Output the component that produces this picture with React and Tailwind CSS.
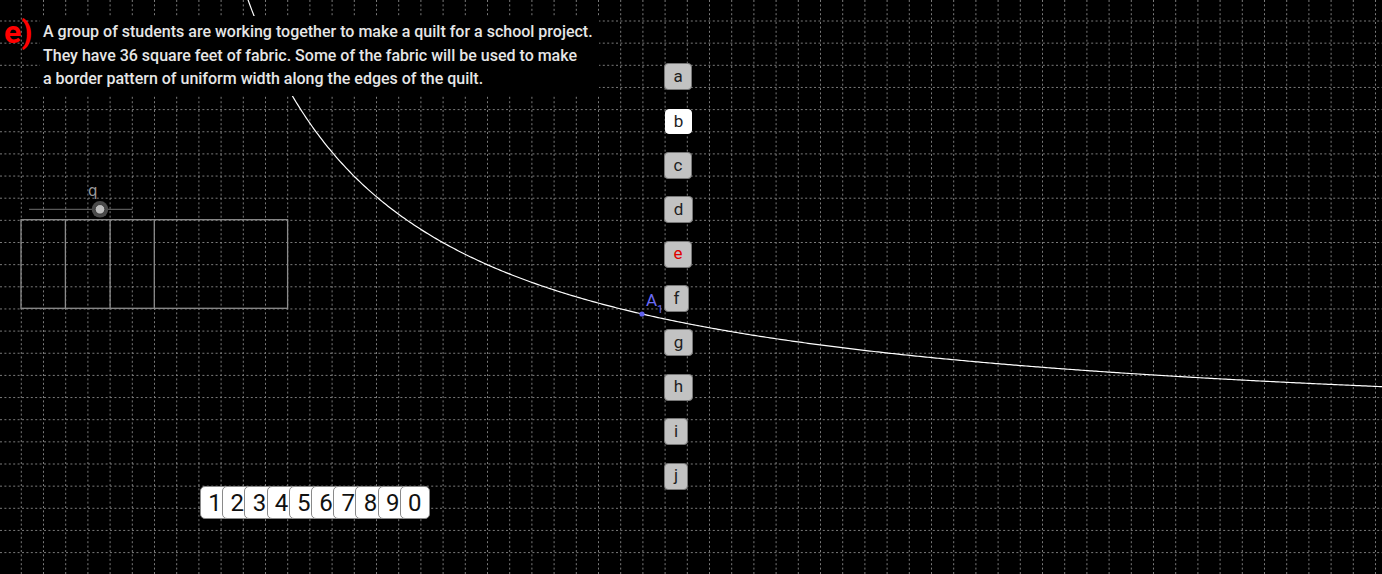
import React from 'react';

const GX = 21.3;
const GY = 21;
const SX = 22.2;
const SY = 22.15;

const letters = [
  { t: 'a', w: 28 },
  { t: 'b', w: 27, active: true },
  { t: 'c', w: 28 },
  { t: 'd', w: 29 },
  { t: 'e', w: 28, red: true },
  { t: 'f', w: 25 },
  { t: 'g', w: 29 },
  { t: 'h', w: 29 },
  { t: 'i', w: 24 },
  { t: 'j', w: 24 },
];

const digits = ['1', '2', '3', '4', '5', '6', '7', '8', '9', '0'];

const Grid = () => {
  const xs = [];
  for (let k = -1; k < 63; k++) xs.push(GX + SX * k);
  const ys = [];
  for (let k = -1; k < 26; k++) ys.push(GY + SY * k);

  // hyperbola through the point A1
  const pts = [];
  for (let x = 240; x <= 1390; x += 2) {
    pts.push(`${x},${(441 - 70286 / (x - 88.7)).toFixed(2)}`);
  }

  return (
    <svg className="absolute inset-0" width="1382" height="574">
      {xs.map((x) => (
        <line key={'x' + x} x1={x} y1="0" x2={x} y2="574" stroke="#7a7a7a" strokeWidth="1" strokeDasharray="2 2.4" />
      ))}
      {ys.map((y) => (
        <line key={'y' + y} x1="0" y1={y} x2="1382" y2={y} stroke="#7a7a7a" strokeWidth="1" strokeDasharray="2 2.4" />
      ))}

      {/* quilt */}
      <rect x="21" y="219.7" width="266.6" height="88.6" fill="none" stroke="#8c8c8c" strokeWidth="1.3" />
      <line x1="65.4" y1="219.7" x2="65.4" y2="308.3" stroke="#8c8c8c" strokeWidth="1.3" />
      <line x1="110.1" y1="219.7" x2="110.1" y2="308.3" stroke="#8c8c8c" strokeWidth="1.3" />
      <line x1="154.3" y1="219.7" x2="154.3" y2="308.3" stroke="#8c8c8c" strokeWidth="1.3" />

      {/* slider q */}
      <line x1="29" y1="209.3" x2="132.3" y2="209.3" stroke="#6e6e6e" strokeWidth="1" />
      <circle cx="100" cy="209.3" r="8.3" fill="#4a4a4a" />
      <circle cx="100" cy="209.3" r="4.8" fill="#bdbdbd" stroke="#2f2f2f" strokeWidth="0.8" />
      <text x="88" y="196" fill="#9a9a9a" fontSize="15" fontFamily="'DejaVu Sans', sans-serif">q</text>

      <polyline points={pts.join(' ')} fill="none" stroke="#ffffff" strokeWidth="1.2" />

      <circle cx="642" cy="314" r="2.6" fill="#6161ee" />
    </svg>
  );
};

const App = () => {
  return (
    <div className="relative w-[1382px] h-[574px] bg-black overflow-hidden" style={{ fontFamily: 'Roboto, sans-serif' }}>
      <Grid />

      <div className="absolute left-[4px] top-[16px] text-[32px] leading-[32px] font-bold text-[#ff0000]">e)</div>

      <div className="absolute left-[40px] top-[16px] w-[559px] h-[80px] bg-black pl-[3px] pt-[4px] text-[16px] leading-[23.5px] font-medium text-[#e6e6e6] whitespace-nowrap">
        <div>A group of students are working together to make a quilt for a school project.</div>
        <div>They have 36 square feet of fabric. Some of the fabric will be used to make</div>
        <div>a border pattern of uniform width along the edges of the quilt.</div>
      </div>

      <div className="absolute left-[646px] top-[290px] text-[#6b6bf5] text-[17px] leading-[20px]">
        A<sub className="text-[11px] align-[-4px]">1</sub>
      </div>

      {/* letter buttons */}
      <div className="absolute left-[664px] top-[63px] flex flex-col">
        {letters.map((b) => (
          <div key={b.t} className="h-[44.4px]">
            <div
              className={
                'flex items-center justify-center rounded-[4px] text-[17px] ' +
                (b.active ? 'h-[25px] mt-[1.5px] ml-px bg-white border border-white ' : 'h-[27px] bg-[#c2c2c2] border border-[#777] ') +
                (b.red ? 'text-[#e00000]' : 'text-[#1e1e1e]')
              }
              style={{ width: b.w }}
            >
              {b.t}
            </div>
          </div>
        ))}
      </div>

      {/* digit buttons */}
      <div className="absolute left-[200px] top-[486px] flex">
        {digits.map((d) => (
          <div
            key={d}
            className="w-[30px] h-[33px] -mr-[7.8px] last:mr-0 flex items-center justify-center rounded-[5px] bg-white border border-[#8a8a8a] text-[24px] text-[#111]"
          >
            {d}
          </div>
        ))}
      </div>
    </div>
  );
};

export default App;
